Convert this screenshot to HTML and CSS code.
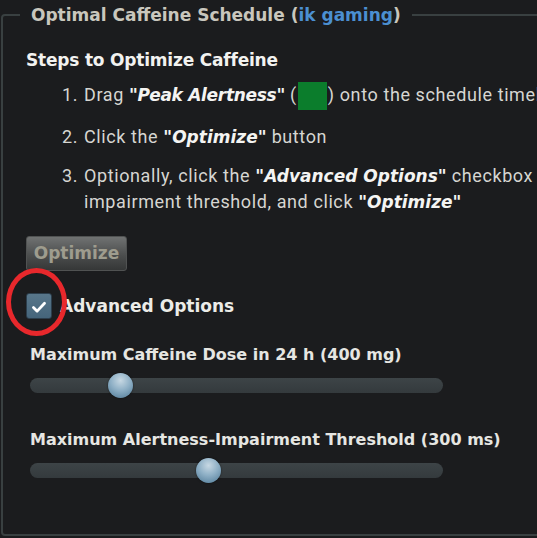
FILE: index.html
```html
<!DOCTYPE html>
<html lang="en">
<head>
<meta charset="utf-8">
<title>Optimal Caffeine Schedule</title>
<link rel="stylesheet" href="styles.css">
</head>
<body>
<fieldset class="panel">
  <legend class="panel-title">Optimal Caffeine Schedule (<span class="brand">ik gaming</span>)</legend>
  <h2 class="steps-title">Steps to Optimize Caffeine</h2>
  <ol class="steps">
    <li class="step step-first"><span class="num">1.</span><span class="step-text">Drag <b>"Peak Alertness"</b> (<span class="swatch"></span>) onto the schedule timeline</span></li>
    <li class="step step-second"><span class="num">2.</span><span class="step-text">Click the <b>"Optimize"</b> button</span></li>
    <li class="step"><span class="num">3.</span><span class="step-text">Optionally, click the <b>"Advanced Options"</b> checkbox<br>impairment threshold, and click <b>"Optimize"</b></span></li>
  </ol>
  <button class="btn" type="button" disabled>Optimize</button>
  <label class="check-row">
    <span class="checkbox">
      <svg viewBox="0 0 26 26" width="26" height="26"><path d="M7 13.5 L11 17.5 L19 9" fill="none" stroke="#ffffff" stroke-width="3" stroke-linecap="round" stroke-linejoin="round"/></svg>
    </span>
    <span class="check-label">Advanced Options</span>
    <span class="highlight"></span>
  </label>
  <div class="slider-group">
    <div class="slider-label">Maximum Caffeine Dose in 24 h (400 mg)</div>
    <div class="track"><span class="thumb" style="left: 78px"></span></div>
  </div>
  <div class="slider-group">
    <div class="slider-label">Maximum Alertness-Impairment Threshold (300 ms)</div>
    <div class="track"><span class="thumb" style="left: 166px"></span></div>
  </div>
</fieldset>
</body>
</html>
```

FILE: styles.css
```css
html, body {
  margin: 0;
  padding: 0;
  background: #1b1c1e;
  overflow: hidden;
}
body {
  width: 537px;
  height: 538px;
}
.panel {
  box-sizing: border-box;
  height: 531px;
  margin: 5px -60px 0 1px;
  padding: 0 0 0 23px;
  border: 2px solid #394041;
  border-radius: 4px;
  position: relative;
}
.panel-title {
  margin-left: -6px;
  padding: 0 11px;
  font: bold 17px/20px "DejaVu Sans", sans-serif;
  color: #c9c7bd;
}
.brand {
  color: #4b8fd1;
}
.steps-title {
  margin: 25px 0 0 0;
  font: bold 17px/20px "DejaVu Sans", sans-serif;
  letter-spacing: -0.2px;
  color: #f2f2f0;
}
.steps {
  list-style: none;
  margin: 12px 0 0 36px;
  padding: 0;
  font: 18px/25px Roboto, sans-serif;
  letter-spacing: 0.6px;
  color: #d6d6d2;
}
.step {
  display: flex;
  margin-bottom: 13px;
  white-space: nowrap;
}
.step-first {
  margin-bottom: 14px;
}
.num {
  width: 22px;
  flex: none;
}
.step-text b {
  font: bold oblique 17px/25px "DejaVu Sans", sans-serif;
  letter-spacing: 0;
  color: #f4f4f2;
}
.step-first b {
  letter-spacing: -0.3px;
}
.swatch {
  display: inline-block;
  width: 29px;
  height: 28px;
  background: #0b7d2c;
  vertical-align: middle;
  margin: 0 1px;
}
.btn {
  display: block;
  margin: 21px 0 0 0;
  width: 101px;
  height: 35px;
  border: 1px solid #505252;
  border-radius: 3px;
  background: linear-gradient(#707272, #4c4e4e 55%, #353737);
  font: bold 17px/1 "DejaVu Sans", sans-serif;
  color: #9e9c8e;
  padding: 0;
}
.check-row {
  position: relative;
  display: flex;
  align-items: center;
  gap: 8px;
  margin-top: 21px;
  height: 28px;
}
.checkbox {
  box-sizing: border-box;
  width: 26px;
  height: 26px;
  border: 1px solid #2c3e4c;
  border-radius: 3px;
  background: linear-gradient(#58768a, #45657b);
  display: flex;
}
.check-label {
  font: bold 17px/20px "DejaVu Sans", sans-serif;
  color: #ecece8;
}
.highlight {
  position: absolute;
  left: -20px;
  top: -24px;
  width: 51px;
  height: 58px;
  border: 5px solid #e8282c;
  border-radius: 50%;
}
.slider-group {
  margin-top: 25px;
  margin-left: 4px;
}
.slider-group + .slider-group {
  margin-top: 37px;
}
.slider-label {
  font: bold 16px/20px "DejaVu Sans", sans-serif;
  color: #e6e6e2;
}
.track {
  position: relative;
  margin-top: 13px;
  width: 413px;
  height: 15px;
  border-radius: 8px;
  background: linear-gradient(#3d4447, #343a3d);
}
.thumb {
  position: absolute;
  top: -5px;
  width: 25px;
  height: 25px;
  border-radius: 50%;
  background: radial-gradient(circle at 50% 30%, #c7d8e3, #8fb0c6 45%, #4d7895 100%);
  box-shadow: 0 0 2px rgba(0,0,0,0.6);
}
```
